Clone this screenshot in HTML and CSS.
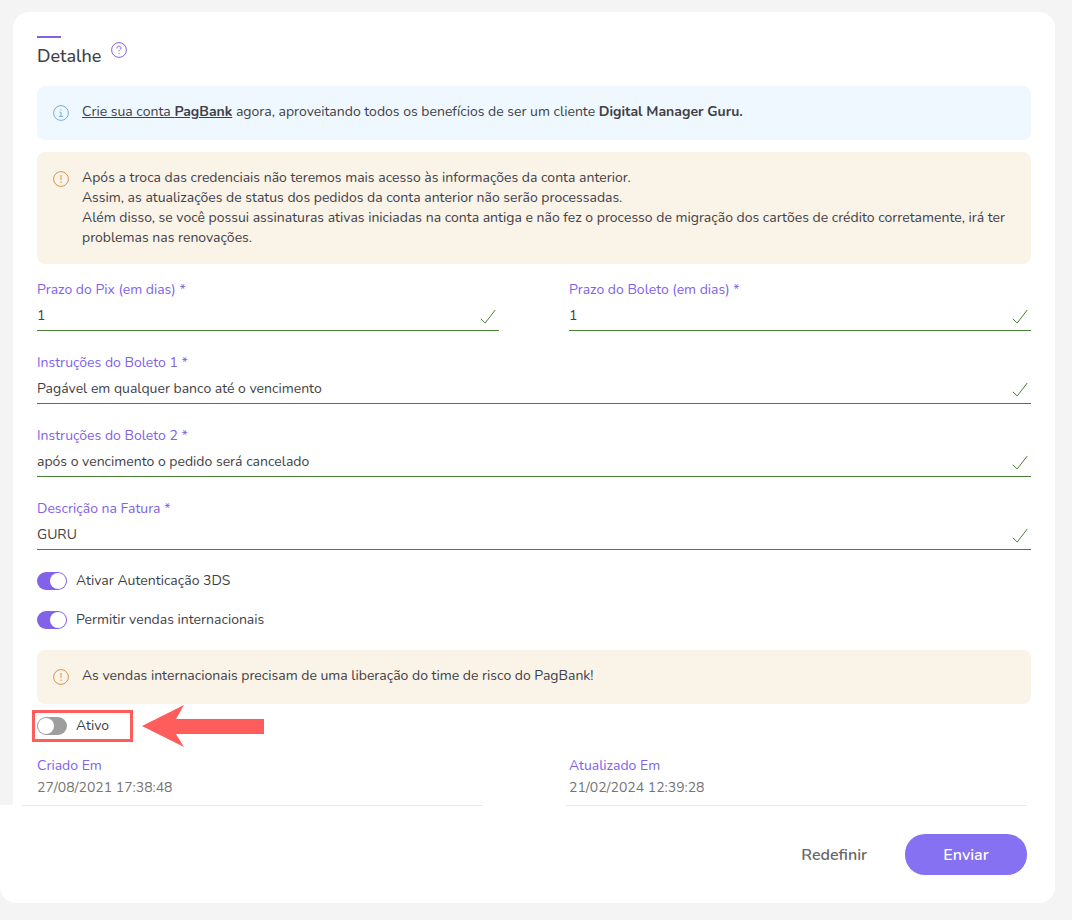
FILE: index.html
```
<!DOCTYPE html>
<html lang="pt-BR">
<head>
  <meta charset="UTF-8">
  <meta name="viewport" content="width=device-width, initial-scale=1">
  <title>Detalhe</title>
  <link rel="stylesheet" href="styles.css">
</head>
<body>
<form class="page">
  <div class="panel">
    <div class="heading">
      <h1>Detalhe</h1>
      <button type="button" class="help" aria-label="Ajuda">
        <svg class="icon" viewBox="0 0 16 16"><circle cx="8" cy="8" r="7.4"/><path d="M6 6.4C6 5 6.9 4.2 8 4.2s2 .8 2 1.9c0 1.4-2 1.6-2 3.3"/><path d="M8 10.9v1.2"/></svg>
      </button>
    </div>

    <div class="alert info">
      <svg class="icon" viewBox="0 0 16 16"><circle cx="8" cy="8" r="7.4"/><path d="M6.4 7.2H8v4M6 11.4h4M7.9 4.2v1.2"/></svg>
      <p><a href="#">Crie sua conta <b>PagBank</b></a> agora, aproveitando todos os benefícios de ser um cliente <b>Digital Manager Guru.</b></p>
    </div>
    <div class="alert warning">
      <svg class="icon" viewBox="0 0 16 16"><circle cx="8" cy="8" r="7.4"/><path d="M8 4v5.2M8 10.6v1.4"/></svg>
      <p>Após a troca das credenciais não teremos mais acesso às informações da conta anterior.<br>
      Assim, as atualizações de status dos pedidos da conta anterior não serão processadas.<br>
      Além disso, se você possui assinaturas ativas iniciadas na conta antiga e não fez o processo de migração dos cartões de crédito corretamente, irá ter problemas nas renovações.</p>
    </div>

    <div class="fields">
      <div class="field">
        <label for="pix">Prazo do Pix (em dias) *</label>
        <div class="control">
          <input type="text" id="pix" value="1">
          <svg class="check" viewBox="0 0 16 16"><path d="M.8 9.8l4.4 4.2L15.2 1"/></svg>
        </div>
      </div>
      <div class="field">
        <label for="boleto">Prazo do Boleto (em dias) *</label>
        <div class="control">
          <input type="text" id="boleto" value="1">
          <svg class="check" viewBox="0 0 16 16"><path d="M.8 9.8l4.4 4.2L15.2 1"/></svg>
        </div>
      </div>
      <div class="field wide">
        <label for="inst1">Instruções do Boleto 1 *</label>
        <div class="control">
          <input type="text" id="inst1" value="Pagável em qualquer banco até o vencimento">
          <svg class="check" viewBox="0 0 16 16"><path d="M.8 9.8l4.4 4.2L15.2 1"/></svg>
        </div>
      </div>
      <div class="field wide">
        <label for="inst2">Instruções do Boleto 2 *</label>
        <div class="control">
          <input type="text" id="inst2" value="após o vencimento o pedido será cancelado">
          <svg class="check" viewBox="0 0 16 16"><path d="M.8 9.8l4.4 4.2L15.2 1"/></svg>
        </div>
      </div>
      <div class="field wide">
        <label for="fatura">Descrição na Fatura *</label>
        <div class="control">
          <input type="text" id="fatura" value="GURU">
          <svg class="check" viewBox="0 0 16 16"><path d="M.8 9.8l4.4 4.2L15.2 1"/></svg>
        </div>
      </div>
    </div>

    <div class="switches">
      <label class="switch"><input type="checkbox" checked>Ativar Autenticação 3DS</label>
      <label class="switch"><input type="checkbox" checked>Permitir vendas internacionais</label>
    </div>

    <div class="alert warning">
      <svg class="icon" viewBox="0 0 16 16"><circle cx="8" cy="8" r="7.4"/><path d="M8 4v5.2M8 10.6v1.4"/></svg>
      <p>As vendas internacionais precisam de uma liberação do time de risco do PagBank!</p>
    </div>

    <div class="active-row">
      <label class="switch marked"><input type="checkbox">Ativo</label>
      <svg class="arrow" viewBox="0 0 124 44"><path d="M1 22L43 1l-8 14h88v15H35l8 13z"/></svg>
    </div>

    <div class="dates">
      <dl>
        <dt>Criado Em</dt>
        <dd>27/08/2021 17:38:48</dd>
      </dl>
      <dl>
        <dt>Atualizado Em</dt>
        <dd>21/02/2024 12:39:28</dd>
      </dl>
    </div>
  </div>

  <div class="footer">
    <div class="rules"><hr><hr></div>
    <div class="buttons">
      <button type="reset" class="reset">Redefinir</button>
      <button type="submit" class="submit">Enviar</button>
    </div>
  </div>
</form>
</body>
</html>
```
FILE: styles.css
```
* {
  box-sizing: border-box;
  margin: 0;
  padding: 0;
}

body {
  background: #f4f4f4;
  color: #3f3f46;
  font: 14px/20px Nunito, "Nunito Sans", "Open Sans", sans-serif;
}

input, button {
  font: inherit;
  color: inherit;
  border: 0;
  background: none;
}

.page {
  padding: 12px 17px 17px 0;
}

.panel {
  margin-left: 13px;
  padding: 24px 24px 7px;
  background: #fff;
  border-radius: 16px 16px 0 0;
}

.heading {
  display: flex;
  gap: 10px;
  height: 50px;
}

.heading h1 {
  font-size: 18px;
  line-height: 24px;
  font-weight: 500;
}

.heading h1::before {
  content: "";
  display: block;
  width: 24px;
  height: 2px;
  margin-bottom: 6px;
  background: #8162e8;
}

.help {
  align-self: flex-start;
  margin-top: 6px;
  height: 16px;
  color: #8162e8;
  cursor: pointer;
}

.icon {
  display: block;
  flex: none;
  width: 16px;
  height: 16px;
  fill: none;
  stroke: currentColor;
  stroke-width: 1;
}

.alert {
  display: flex;
  gap: 13px;
  min-height: 54px;
  padding: 16px;
  border-radius: 8px;
}

.alert + .alert {
  margin-top: 12px;
}

.alert .icon {
  margin-top: 3px;
}

.alert a {
  color: inherit;
}

.info {
  background: #eff8ff;
}

.info .icon {
  color: #6fb0d8;
}

.warning {
  background: #faf3e8;
}

.warning .icon {
  color: #d9954a;
}

.fields {
  display: grid;
  grid-template-columns: 1fr 1fr;
  gap: 22px 70px;
  margin-top: 16px;
}

.wide {
  grid-column: 1 / -1;
}

.field label, dt {
  display: block;
  color: #8162e8;
}

.control {
  display: flex;
  align-items: center;
  height: 31px;
  padding-right: 3px;
  border-bottom: 1px solid #4b8037;
}

.control input {
  flex: 1;
  min-width: 0;
  height: 30px;
  outline: 0;
}

.check {
  width: 16px;
  height: 16px;
  margin-top: 4px;
  fill: none;
  stroke: #4b8037;
  stroke-width: 1;
}

.switches {
  display: grid;
  gap: 19px;
  margin: 21px 0 20px;
}

.switch {
  display: flex;
  align-items: center;
  gap: 9px;
}

.switch input {
  appearance: none;
  display: flex;
  width: 30px;
  height: 18px;
  padding: 1px;
  border-radius: 9px;
  background: #9e9e9e;
}

.switch input::before {
  content: "";
  width: 16px;
  height: 16px;
  border-radius: 50%;
  background: #fff;
}

.switch input:checked {
  justify-content: flex-end;
  background: #8162e8;
}

.active-row {
  display: flex;
  align-items: center;
  gap: 8px;
  height: 44px;
  margin-left: -5px;
}

.marked {
  width: 101px;
  height: 32px;
  padding-left: 2px;
  border: 3px solid #ff5c5c;
}

.arrow {
  width: 124px;
  height: 44px;
  fill: #ff5c5c;
}

.dates {
  display: grid;
  grid-template-columns: 1fr 1fr;
  gap: 70px;
  margin-top: 8px;
}

dd {
  margin-top: 2px;
  color: #757575;
}

.footer {
  padding: 0 28px 28px 22px;
  background: #fff;
  border-radius: 0 0 16px 16px;
}

.rules {
  display: grid;
  grid-template-columns: 1fr 1fr;
  gap: 83px;
}

.rules hr {
  border: 0;
  border-top: 1px solid #e8e8e8;
}

.buttons {
  display: flex;
  justify-content: flex-end;
  gap: 38px;
  margin-top: 28px;
  font-size: 16px;
  font-weight: 600;
}

.buttons button {
  height: 41px;
  cursor: pointer;
}

.reset {
  color: #666;
}

.submit {
  width: 122px;
  border-radius: 20px;
  background: #8571f2;
}

.buttons .submit {
  color: #fff;
}
```
